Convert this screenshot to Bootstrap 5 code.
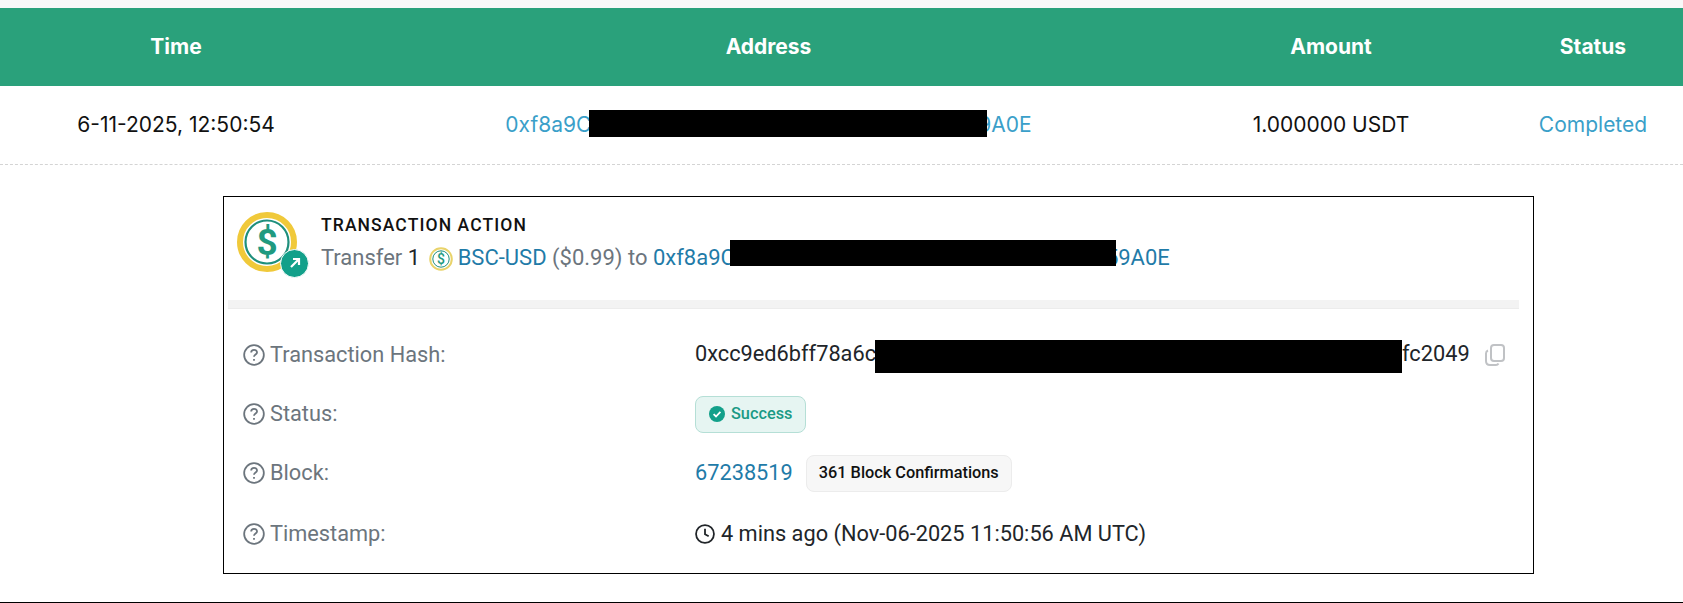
<!DOCTYPE html>
<html lang="en">
<head>
    <meta charset="UTF-8">
    <meta name="viewport" content="width=device-width, initial-scale=1.0">
    <title>Transaction Details</title>

    <!-- Bootstrap CSS -->
    <link href="https://cdn.jsdelivr.net/npm/bootstrap@5.3.0/dist/css/bootstrap.min.css" rel="stylesheet">

    <!-- Custom Styles -->
    <style>
        html, body {
            height: 603px;
            overflow: hidden;
        }
        body {
            background-color: #fff;
            font-family: Roboto, "Liberation Sans", sans-serif;
            color: #212529;
        }
        .top-strip {
            height: 8px;
            background-color: #f8f8f8;
        }
        .tx-table {
            font-family: Inter, "Liberation Sans", sans-serif;
            margin-bottom: 0;
            table-layout: fixed;
            width: 1683px;
        }
        .tx-table th {
            height: 78px;
            padding: 0;
            background-color: #2aa17b;
            color: #fff;
            font-size: 21px;
            font-weight: 700;
            text-align: center;
            vertical-align: middle;
            border: 0;
        }
        .tx-table td {
            height: 78px;
            padding: 0;
            font-size: 21px;
            color: #111;
            text-align: center;
            vertical-align: middle;
            border: 0;
            border-bottom: 1px dashed #d4d4d4;
        }
        .col-time { width: 352px; }
        .col-address { width: 833px; }
        .col-amount { width: 292px; }
        .cell-status { padding-left: 26px !important; }
        .row-link, .row-link:hover {
            color: #3a9fc9;
            text-decoration: none;
        }
        .redact {
            display: inline-block;
            position: relative;
            background-color: #000;
        }
        .redact-row { width: 398px; height: 27px; margin: 0 -9px 0 -2px; vertical-align: -5px; }
        .redact-action { width: 386px; height: 26px; margin: 0 -10px 0 -5px; vertical-align: -1px; }
        .redact-hash { width: 527px; height: 33px; margin-left: -1px; vertical-align: -12px; }
        .action-box {
            width: 1311px;
            height: 378px;
            margin: 31px 0 28px 223px;
            border: 1px solid #000;
            padding: 0 14px 0 4px;
        }
        .action-head {
            height: 103px;
            padding: 14px 0 0 9px;
        }
        .coin-wrap {
            position: relative;
            width: 60px;
            height: 60px;
            margin-top: 1px;
            margin-right: 24px;
        }
        .coin-badge {
            position: absolute;
            right: -12px;
            bottom: -6px;
            width: 29px;
            height: 29px;
            border-radius: 50%;
            background-color: #12a08a;
            border: 1px solid #fff;
        }
        .action-title {
            font-size: 17.5px;
            font-weight: 500;
            letter-spacing: 1.1px;
            color: #111;
            line-height: 24px;
            margin-top: 2px;
        }
        .action-line {
            font-size: 22px;
            line-height: 30px;
            color: #6c757d;
            margin-top: 3px;
        }
        .action-line b {
            font-weight: 400;
            color: #212529;
        }
        .tx-link, .tx-link:hover {
            color: #1f7ba8;
            text-decoration: none;
        }
        .coin-small {
            vertical-align: -6px;
            margin: 0 5px 0 3px;
        }
        .action-divider {
            height: 9px;
            background-color: #f3f3f3;
            border-bottom: 1px solid #ececec;
        }
        .info-list {
            padding: 17px 0 0 15px;
            font-size: 21.75px;
        }
        .info-row {
            display: flex;
            align-items: center;
            height: 59px;
        }
        .info-row:last-child {
            margin-top: 2px;
        }
        .info-label {
            width: 452px;
            color: #6c757d;
            display: flex;
            align-items: center;
            gap: 5px;
            flex-shrink: 0;
        }
        .status-pill {
            display: inline-flex;
            align-items: center;
            gap: 6px;
            height: 37px;
            padding: 0 13px 0 13px;
            background-color: #e6f5f2;
            border: 1px solid #b5dfd6;
            border-radius: 8px;
            color: #1a9a85;
            font-size: 16.3px;
            font-weight: 500;
        }
        .confirm-pill {
            display: inline-flex;
            align-items: center;
            height: 37px;
            padding: 0 12px;
            margin-left: 13px;
            background-color: #f7f7f7;
            border: 1px solid #ececec;
            border-radius: 8px;
            color: #111;
            font-size: 16.3px;
            font-weight: 500;
        }
        .time-value {
            gap: 6px;
        }
        .copy-icon {
            margin-left: 15px;
        }
        .bottom-line {
            border-top: 1px solid #000;
        }
    </style>
</head>
<body>
    <div class="top-strip"></div>

    <!-- Transactions table -->
    <table class="table tx-table">
        <thead>
            <tr>
                <th class="col-time">Time</th>
                <th class="col-address">Address</th>
                <th class="col-amount">Amount</th>
                <th class="cell-status">Status</th>
            </tr>
        </thead>
        <tbody>
            <tr>
                <td>6-11-2025, 12:50:54</td>
                <td><a class="row-link" href="#">0xf8a9C<span class="redact redact-row"></span>9A0E</a></td>
                <td>1.000000 USDT</td>
                <td class="cell-status"><a class="row-link" href="#">Completed</a></td>
            </tr>
        </tbody>
    </table>

    <!-- Transaction details -->
    <div class="action-box">
        <div class="action-head d-flex align-items-start">
            <div class="coin-wrap flex-shrink-0">
                <svg width="60" height="60" viewBox="0 0 60 60">
                    <circle cx="30" cy="30" r="27" fill="#fff" stroke="#f0c93a" stroke-width="6"/>
                    <circle cx="30" cy="30" r="21.5" fill="#fff" stroke="#1f8f7c" stroke-width="2.2"/>
                    <text x="30" y="43" text-anchor="middle" font-family="Roboto, sans-serif" font-size="37" font-weight="700" fill="#1f9a80">$</text>
                </svg>
                <span class="coin-badge d-flex align-items-center justify-content-center">
                    <svg width="14" height="14" viewBox="0 0 14 14" fill="none" stroke="#fff" stroke-width="2.2"><path d="M3 11 10.500 3.500M5 3h6v6"/></svg>
                </span>
            </div>
            <div>
                <div class="action-title">TRANSACTION ACTION</div>
                <div class="action-line">Transfer <b>1</b>
                    <svg class="coin-small" width="24" height="24" viewBox="0 0 24 24">
                        <circle cx="12" cy="12" r="10.800" fill="#fff" stroke="#e9d36a" stroke-width="2"/>
                        <circle cx="12" cy="12" r="8.200" fill="#fff" stroke="#1f8f7c" stroke-width="1"/>
                        <text x="12" y="17" text-anchor="middle" font-family="Roboto, sans-serif" font-size="14" font-weight="500" fill="#1f9a80">$</text>
                    </svg><a class="tx-link" href="#">BSC-USD</a> ($0.99) to <a class="tx-link" href="#">0xf8a9C<span class="redact redact-action"></span>59A0E</a>
                </div>
            </div>
        </div>
        <div class="action-divider"></div>
        <div class="info-list">
            <div class="info-row">
                <div class="info-label">
                    <svg width="22" height="22" viewBox="0 0 21 21" fill="none" stroke="#6c757d" stroke-width="1.700"><circle cx="10.500" cy="10.500" r="9.400"/><path d="M7.800 8.200c0-3.400 5.600-3.400 5.600-.2 0 2-2.900 2-2.900 4.200"/><path d="M10.500 14.200v1.800"/></svg>
                    Transaction Hash:
                </div>
                <div>0xcc9ed6bff78a6c<span class="redact redact-hash"></span>fc2049</div>
                <svg class="copy-icon" width="20" height="22" viewBox="0 0 20 22" fill="none" stroke="#c0c2c5" stroke-width="2"><rect x="6" y="1" width="13" height="16" rx="3"/><path d="M3 6.500C1.700 7 1 8 1 9.500V17c0 2.500 1.500 4 4 4h6c1 0 2-.6 2.500-1.500"/></svg>
            </div>
            <div class="info-row">
                <div class="info-label">
                    <svg width="22" height="22" viewBox="0 0 21 21" fill="none" stroke="#6c757d" stroke-width="1.700"><circle cx="10.500" cy="10.500" r="9.400"/><path d="M7.800 8.200c0-3.400 5.600-3.400 5.600-.2 0 2-2.900 2-2.900 4.200"/><path d="M10.500 14.200v1.800"/></svg>
                    Status:
                </div>
                <span class="status-pill">
                    <svg width="16" height="16" viewBox="0 0 16 16"><circle cx="8" cy="8" r="8" fill="#12a08a"/><path d="M4.600 8.200 7 10.500 11.400 5.900" fill="none" stroke="#fff" stroke-width="1.800"/></svg>
                    Success
                </span>
            </div>
            <div class="info-row">
                <div class="info-label">
                    <svg width="22" height="22" viewBox="0 0 21 21" fill="none" stroke="#6c757d" stroke-width="1.700"><circle cx="10.500" cy="10.500" r="9.400"/><path d="M7.800 8.200c0-3.400 5.600-3.400 5.600-.2 0 2-2.900 2-2.900 4.200"/><path d="M10.500 14.200v1.800"/></svg>
                    Block:
                </div>
                <a class="tx-link" href="#">67238519</a>
                <span class="confirm-pill">361 Block Confirmations</span>
            </div>
            <div class="info-row">
                <div class="info-label">
                    <svg width="22" height="22" viewBox="0 0 21 21" fill="none" stroke="#6c757d" stroke-width="1.700"><circle cx="10.500" cy="10.500" r="9.400"/><path d="M7.800 8.200c0-3.400 5.600-3.400 5.600-.2 0 2-2.900 2-2.900 4.200"/><path d="M10.500 14.200v1.800"/></svg>
                    Timestamp:
                </div>
                <div class="d-flex align-items-center time-value">
                    <svg width="20" height="20" viewBox="0 0 19 19" fill="none" stroke="#212529" stroke-width="1.700"><circle cx="9.500" cy="9.500" r="8.500"/><path d="M9.500 4.500v5.200l3.500 2"/></svg>
                    4 mins ago (Nov-06-2025 11:50:56 AM UTC)
                </div>
            </div>
        </div>
    </div>
    <div class="bottom-line"></div>
</body>
</html>
